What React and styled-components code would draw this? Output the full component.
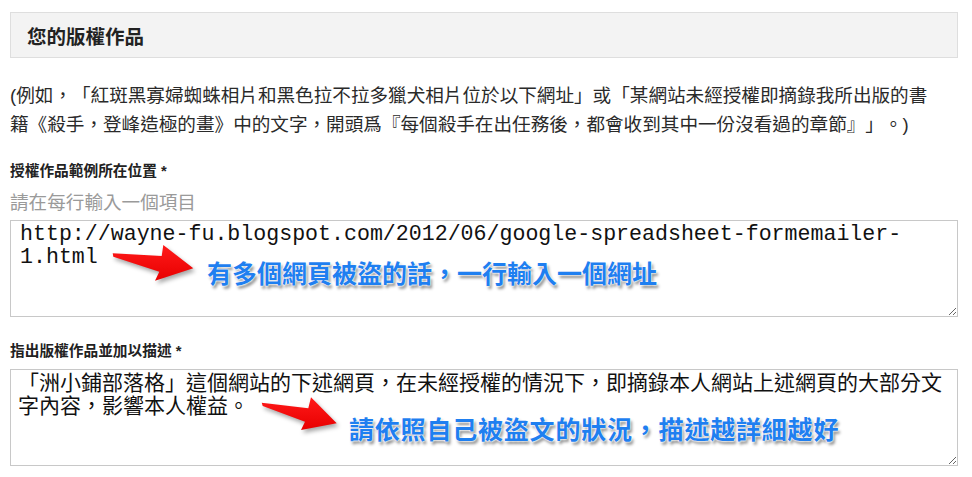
import styled, { createGlobalStyle } from 'styled-components';

const GlobalStyle = createGlobalStyle`
  body {
    margin: 0;
    background: #fff;
    font-family: "Liberation Sans", "Noto Sans CJK TC", sans-serif;
    color: #222;
    text-spacing-trim: space-all;
  }
`;

const Page = styled.div`
  width: 948px;
  padding: 12px 14px 0 10px;
  display: flex;
  flex-direction: column;
`;

const SectionHeader = styled.div`
  height: 44px;
  display: flex;
  align-items: center;
  padding-left: 16px;
  background: #f3f3f3;
  border: 1px solid #dedede;
`;

const SectionTitle = styled.h2`
  margin: 0;
  font-size: 19.5px;
  font-weight: bold;
  color: #222;
`;

const Example = styled.p`
  margin: 23px 0 0;
  padding-right: 14px;
  font-size: 18.6px;
  line-height: 29px;
  color: #2a2a2a;
`;

const Field = styled.div`
  display: flex;
  flex-direction: column;
  margin-top: ${(p) => p.$gap}px;
`;

const Label = styled.label`
  font-size: 14.7px;
  line-height: 20px;
  font-weight: bold;
  color: #222;
`;

const Hint = styled.div`
  margin-top: 10px;
  font-size: 18.6px;
  line-height: 24px;
  color: #9a9a9a;
`;

const InputWrap = styled.div`
  position: relative;
  margin-top: ${(p) => p.$gap}px;
`;

const TextArea = styled.textarea`
  display: block;
  box-sizing: border-box;
  width: 948px;
  height: 97px;
  margin: 0;
  padding: ${(p) => (p.$mono ? '2px 9px' : '1px 7px')};
  border: 1px solid #c8c8c8;
  background: #fff;
  color: #111;
  font-family: ${(p) =>
    p.$mono
      ? '"Liberation Mono", monospace'
      : '"Liberation Sans", "Noto Sans CJK TC", sans-serif'};
  font-size: ${(p) => (p.$mono ? '21.6px' : '21px')};
  line-height: 23px;
  text-spacing-trim: space-all;
  resize: both;
  outline: none;
`;

const Note = styled.div`
  position: absolute;
  left: ${(p) => p.$left}px;
  top: ${(p) => p.$top}px;
  font-family: "Noto Sans CJK TC", sans-serif;
  font-size: 25px;
  line-height: 30px;
  font-weight: bold;
  letter-spacing: ${(p) => p.$spacing || 0}px;
  color: #1f7ff0;
  white-space: nowrap;
  pointer-events: none;
  text-shadow: 0 0 2px #fff, 0 0 2px #fff, 0 0 1px #fff, 2px 3px 3px rgba(0, 0, 0, 0.45);
`;

const ArrowBox = styled.svg`
  position: absolute;
  left: ${(p) => p.$left}px;
  top: ${(p) => p.$top}px;
  overflow: visible;
  pointer-events: none;
  filter: drop-shadow(2px 3px 2px rgba(0, 0, 0, 0.35));
`;

function Arrow({ left, top, width, height, points, id }) {
  return (
    <ArrowBox $left={left} $top={top} width={width} height={height}>
      <defs>
        <linearGradient id={id} x1="0" y1="0" x2="0" y2="1">
          <stop offset="0" stopColor="#ff1a1a" />
          <stop offset="1" stopColor="#e80000" />
        </linearGradient>
      </defs>
      <polygon points={points} fill={`url(#${id})`} />
    </ArrowBox>
  );
}

function App() {
  return (
    <Page>
      <GlobalStyle />
      <SectionHeader>
        <SectionTitle>您的版權作品</SectionTitle>
      </SectionHeader>
      <Example>
        (例如，「紅斑黑寡婦蜘蛛相片和黑色拉不拉多獵犬相片位於以下網址」或「某網站未經授權即摘錄我所出版的書籍《殺手，登峰造極的畫》中的文字，開頭爲『每個殺手在出任務後，都會收到其中一份沒看過的章節』」。)
      </Example>

      <Field $gap={22}>
        <Label>授權作品範例所在位置 *</Label>
        <Hint>請在每行輸入一個項目</Hint>
        <InputWrap $gap={5}>
          <TextArea
            $mono
            readOnly
            defaultValue={'http://wayne-fu.blogspot.com/2012/06/google-spreadsheet-formemailer-\n1.html'}
          />
          <Arrow
            id="arrowA"
            left={100}
            top={23}
            width={90}
            height={42}
            points="2.7,10.3 51.7,13 53.3,2 83.3,25.3 45,37.7 49.3,28.7 3.3,13.7"
          />
          <Note $left={197} $top={37}>有多個網頁被盜的話，一行輸入一個網址</Note>
        </InputWrap>
      </Field>

      <Field $gap={24}>
        <Label>指出版權作品並加以描述 *</Label>
        <InputWrap $gap={8}>
          <TextArea
            readOnly
            defaultValue="「洲小鋪部落格」這個網站的下述網頁，在未經授權的情況下，即摘錄本人網站上述網頁的大部分文字內容，影響本人權益。"
          />
          <Arrow
            id="arrowB"
            left={249}
            top={26}
            width={85}
            height={40}
            points="2.7,7.7 49.3,13.3 52,2.3 77.7,28.3 42,35 46,26.7 3.7,11"
          />
          <Note $left={339} $top={44} $spacing={0.8}>
            請依照自己被盜文的狀況，描述越詳細越好
          </Note>
        </InputWrap>
      </Field>
    </Page>
  );
}

export default App;
